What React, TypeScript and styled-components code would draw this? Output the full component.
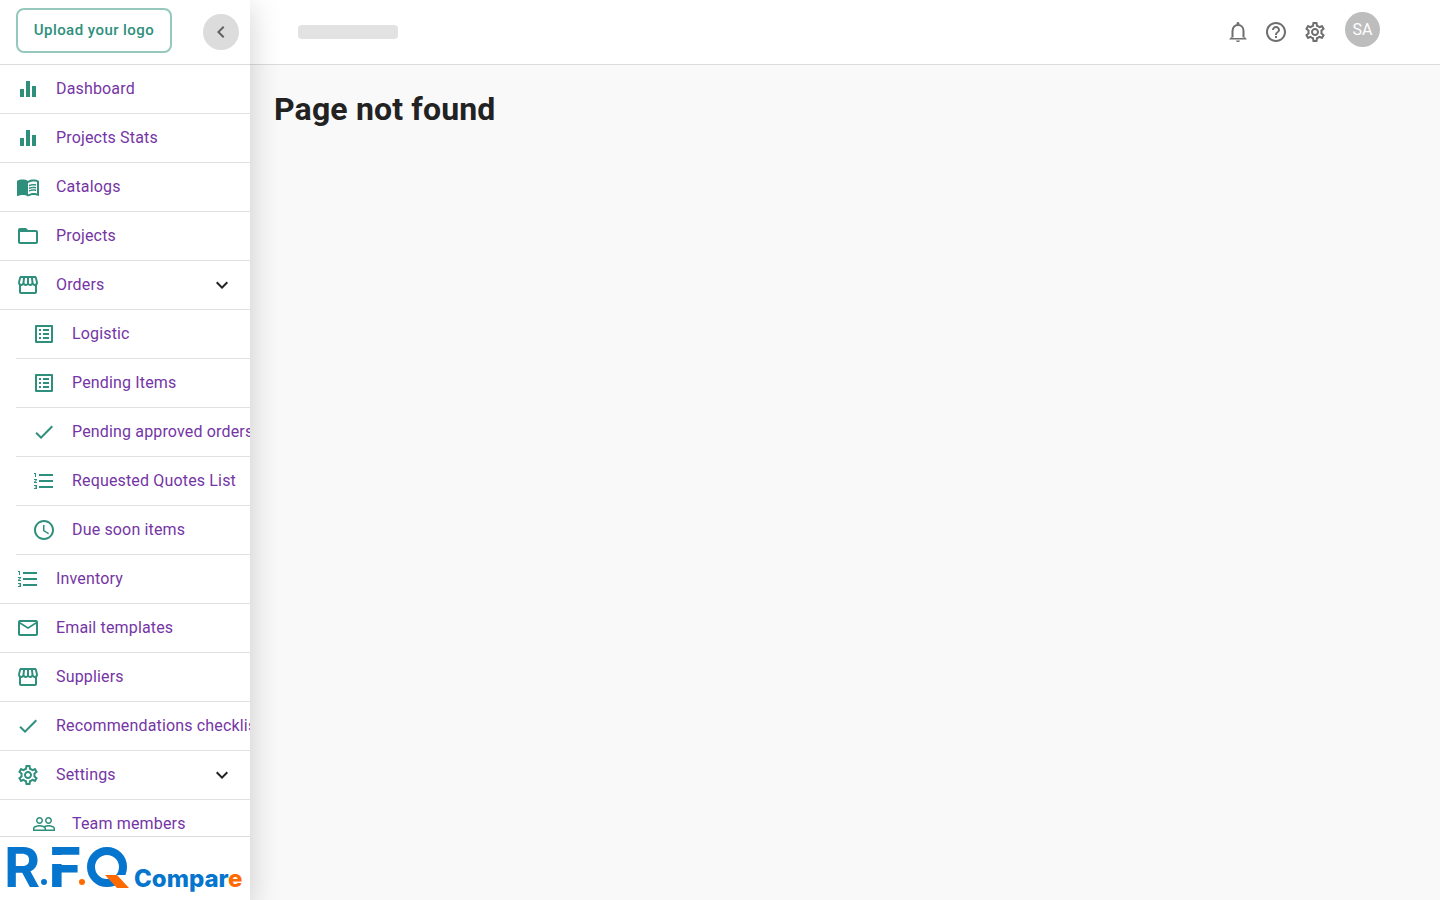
import React from "react";
import styled, { createGlobalStyle } from "styled-components";
import type { IconType } from "react-icons";
import {
  MdAccessTime,
  MdCheck,
  MdChevronLeft,
  MdEqualizer,
  MdExpandMore,
  MdFolderOpen,
  MdFormatListNumbered,
  MdHelpOutline,
  MdMailOutline,
  MdMenuBook,
  MdOutlineListAlt,
  MdOutlineSettings,
  MdOutlineStorefront,
  MdPeopleOutline,
} from "react-icons/md";

const GlobalStyle = createGlobalStyle`
  *, *::before, *::after { box-sizing: border-box; }
  body {
    margin: 0;
    background: #f9f9f9;
    color: #222222;
    font-family: Roboto, "Liberation Sans", sans-serif;
    font-size: 16px;
    line-height: 24px;
    letter-spacing: 0.01em;
  }
  button { font: inherit; cursor: pointer; }
`;

const Layout = styled.div`
  display: grid;
  grid-template-columns: 250px minmax(0, 1fr);
  min-height: 100vh;
`;

const Sidebar = styled.aside`
  position: sticky;
  top: 0;
  z-index: 1;
  display: flex;
  flex-direction: column;
  height: 100vh;
  background: #ffffff;
  box-shadow: 0 8px 28px 2px rgba(0, 0, 0, 0.17);
`;

const SidebarHeader = styled.div`
  display: flex;
  align-items: flex-start;
  justify-content: space-between;
  flex: none;
  height: 65px;
  padding: 8px 11px 0 16px;
  border-bottom: 1px solid #dcdcdc;
`;

const UploadButton = styled.button`
  width: 156px;
  height: 45px;
  padding: 0 0 2px;
  border: 2px solid #96c8be;
  border-radius: 8px;
  background: #ffffff;
  color: #2e8f7d;
  font-size: 15px;
  font-weight: 500;
  letter-spacing: 0.03em;
  white-space: nowrap;
`;

const CollapseButton = styled.button`
  display: grid;
  place-items: center;
  width: 36px;
  height: 36px;
  margin-top: 6px;
  padding: 0;
  border: 0;
  border-radius: 50%;
  background: #dcdcdc;
  color: #616161;
`;

const Nav = styled.nav`
  flex: 1;
  min-height: 0;
  overflow: hidden auto;
  scrollbar-width: none;
`;

const List = styled.ul<{ $nested?: boolean }>`
  margin: 0;
  padding: 0 0 0 ${(p) => (p.$nested ? "16px" : "0")};
  list-style: none;
`;

const Row = styled.div`
  display: flex;
  align-items: center;
  height: 49px;
  padding: 0 16px;
  border-bottom: 1px solid #e0e0e0;
`;

const RowLink = styled.a`
  display: flex;
  flex: 1;
  align-items: center;
  gap: 16px;
  color: #7535a5;
  text-decoration: none;
  white-space: nowrap;

  svg { flex: none; color: #2e8f7d; }
`;

const ExpandButton = styled.button`
  display: grid;
  place-items: center;
  padding: 0;
  border: 0;
  background: none;
  color: #222222;
`;

const SidebarFooter = styled.div`
  flex: none;
  height: 64px;
  border-top: 1px solid #dcdcdc;

  svg { display: block; }
`;

const Page = styled.div`
  display: flex;
  flex-direction: column;
`;

const TopBar = styled.header`
  display: flex;
  align-items: center;
  justify-content: space-between;
  height: 65px;
  padding: 0 60px 0 48px;
  border-bottom: 1px solid #dcdcdc;
  background: #ffffff;
`;

const Placeholder = styled.div`
  width: 100px;
  height: 14px;
  border-radius: 4px;
  background: #e2e2e2;
`;

const Actions = styled.div`
  display: flex;
  align-items: center;
  gap: 15px;
`;

const IconButton = styled.button`
  display: grid;
  place-items: center;
  padding: 0;
  border: 0;
  background: none;
  color: #6e6e6e;
`;

const Avatar = styled.button`
  display: grid;
  place-items: center;
  width: 35px;
  height: 35px;
  margin: 0 0 5px 3px;
  padding: 0;
  border: 0;
  border-radius: 50%;
  background: #bdbdbd;
  color: #ffffff;
`;

const Main = styled.main`
  padding: 24px;
`;

const Title = styled.h1`
  margin: 0;
  font-size: 32px;
  line-height: 40px;
  font-weight: 700;
`;

type Item = { label: string; icon: IconType; children?: Item[] };

const items: Item[] = [
  { label: "Dashboard", icon: MdEqualizer },
  { label: "Projects Stats", icon: MdEqualizer },
  { label: "Catalogs", icon: MdMenuBook },
  { label: "Projects", icon: MdFolderOpen },
  {
    label: "Orders",
    icon: MdOutlineStorefront,
    children: [
      { label: "Logistic", icon: MdOutlineListAlt },
      { label: "Pending Items", icon: MdOutlineListAlt },
      { label: "Pending approved orders", icon: MdCheck },
      { label: "Requested Quotes List", icon: MdFormatListNumbered },
      { label: "Due soon items", icon: MdAccessTime },
    ],
  },
  { label: "Inventory", icon: MdFormatListNumbered },
  { label: "Email templates", icon: MdMailOutline },
  { label: "Suppliers", icon: MdOutlineStorefront },
  { label: "Recommendations checklist", icon: MdCheck },
  {
    label: "Settings",
    icon: MdOutlineSettings,
    children: [{ label: "Team members", icon: MdPeopleOutline }],
  },
];

function NavList({ entries, nested }: { entries: Item[]; nested?: boolean }) {
  return (
    <List $nested={nested}>
      {entries.map(({ label, icon: Icon, children }) => (
        <li key={label}>
          <Row>
            <RowLink href="#">
              <Icon size={24} />
              <span>{label}</span>
            </RowLink>
            {children && (
              <ExpandButton aria-label={`Toggle ${label}`}>
                <MdExpandMore size={24} />
              </ExpandButton>
            )}
          </Row>
          {children && <NavList entries={children} nested />}
        </li>
      ))}
    </List>
  );
}

function BellIcon() {
  return (
    <svg width="22" height="24" viewBox="1 0 22 24" fill="none" stroke="currentColor" strokeWidth="2">
      <path d="M6.5 17.5V11C6.5 7.4 8.8 4.9 12 4.9S17.5 7.4 17.5 11V17.5" />
      <path d="M5.6 16.6L3.4 18.9V19.6H20.6V18.9L18.4 16.6V18H5.6Z" fill="currentColor" stroke="none" />
      <path d="M10.6 4.5V3.4A1.4 1.4 0 0 1 13.4 3.4V4.5Z" fill="currentColor" stroke="none" />
      <path d="M10 20.5H14A2 1.6 0 0 1 10 20.5Z" fill="currentColor" stroke="none" />
    </svg>
  );
}

function Logo() {
  return (
    <svg
      width="249"
      height="63"
      viewBox="0 0 249 63"
      fontFamily="Inter, sans-serif"
      letterSpacing="0"
      fill="#0575cd"
      aria-label="R.F.Q Compare"
    >
      <g fontSize="55">
        <text x="4" y="50" fontWeight="700">R</text>
        <text x="49" y="50" fontWeight="800">F</text>
      </g>
      <rect x="50" y="18" width="32" height="9" fill="#ffffff" />
      <circle cx="44" cy="45" r="3" />
      <circle cx="82" cy="45" r="3" fill="#ff6a00" />
      <circle cx="107" cy="30" r="16" fill="none" stroke="#0575cd" strokeWidth="8" />
      <path d="M116 38H130V52Z" fill="#ffffff" />
      <path d="M105 38H117L129 51H117Z" fill="#ff6a00" />
      <text x="134" y="50" fontSize="24" fontWeight="800">
        Compar<tspan fill="#ff6a00">e</tspan>
      </text>
    </svg>
  );
}

export default function App() {
  return (
    <>
      <GlobalStyle />
      <Layout>
        <Sidebar>
          <SidebarHeader>
            <UploadButton>Upload your logo</UploadButton>
            <CollapseButton aria-label="Collapse menu">
              <MdChevronLeft size={24} />
            </CollapseButton>
          </SidebarHeader>
          <Nav aria-label="Main">
            <NavList entries={items} />
          </Nav>
          <SidebarFooter>
            <Logo />
          </SidebarFooter>
        </Sidebar>
        <Page>
          <TopBar>
            <Placeholder />
            <Actions>
              <IconButton aria-label="Notifications">
                <BellIcon />
              </IconButton>
              <IconButton aria-label="Help">
                <MdHelpOutline size={24} />
              </IconButton>
              <IconButton aria-label="Settings">
                <MdOutlineSettings size={24} />
              </IconButton>
              <Avatar aria-label="Account">SA</Avatar>
            </Actions>
          </TopBar>
          <Main>
            <Title>Page not found</Title>
          </Main>
        </Page>
      </Layout>
    </>
  );
}
